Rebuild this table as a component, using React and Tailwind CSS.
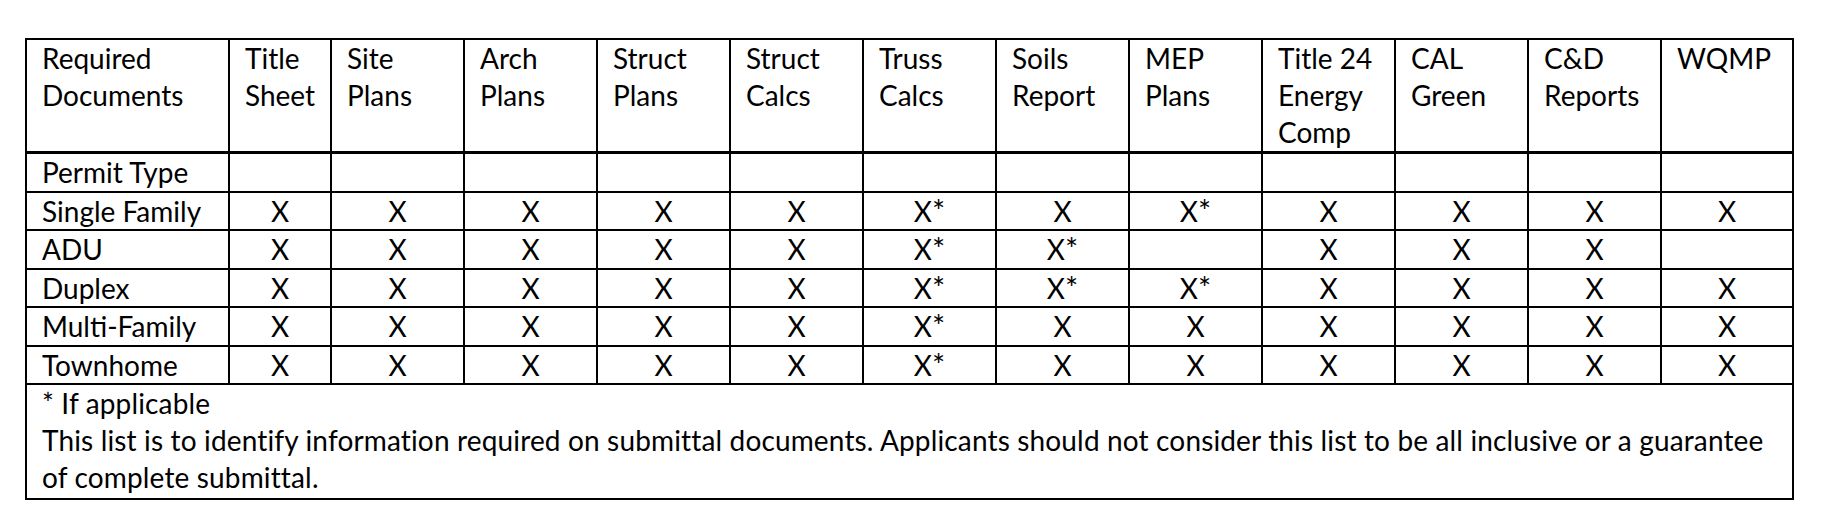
const headers = [
  ["Required", "Documents"],
  ["Title", "Sheet"],
  ["Site", "Plans"],
  ["Arch", "Plans"],
  ["Struct", "Plans"],
  ["Struct", "Calcs"],
  ["Truss", "Calcs"],
  ["Soils", "Report"],
  ["MEP", "Plans"],
  ["Title 24", "Energy", "Comp"],
  ["CAL", "Green"],
  ["C&D", "Reports"],
  ["WQMP"],
];

const rows = [
  ["Single Family", ["X", "X", "X", "X", "X", "X*", "X", "X*", "X", "X", "X", "X"]],
  ["ADU", ["X", "X", "X", "X", "X", "X*", "X*", "", "X", "X", "X", ""]],
  ["Duplex", ["X", "X", "X", "X", "X", "X*", "X*", "X*", "X", "X", "X", "X"]],
  ["Multi-Family", ["X", "X", "X", "X", "X", "X*", "X", "X", "X", "X", "X", "X"]],
  ["Townhome", ["X", "X", "X", "X", "X", "X*", "X", "X", "X", "X", "X", "X"]],
];

const colWidths = [203, 102, 133, 133, 133, 133, 133, 133, 133, 133, 133, 133, 132];

function Mark({ value }) {
  if (value === "X*") {
    return (
      <span>
        X<span className="text-[31px] leading-none">*</span>
      </span>
    );
  }
  return value;
}

export default function App() {
  return (
    <div className="min-h-[525px] w-[1825px] bg-white pl-[25px] pt-[38px] font-['Lato','Liberation_Sans',sans-serif] text-[28px] text-black">
      <table className="table-fixed border-collapse border-2 border-black">
        <colgroup>
          {colWidths.map((w, i) => (
            <col key={i} style={{ width: w }} />
          ))}
        </colgroup>
        <tbody>
          <tr className="h-[112px]">
            {headers.map((lines, i) => (
              <td key={i} className="border-2 border-b-[3px] border-black pl-[15px] align-top leading-[37px]">
                {lines.map((l, j) => (
                  <div key={j}>{l}</div>
                ))}
              </td>
            ))}
          </tr>
          <tr>
            <td className="border-2 border-black pl-[15px] leading-[36.5px]">Permit Type</td>
            {headers.slice(1).map((_, i) => (
              <td key={i} className="border-2 border-black" />
            ))}
          </tr>
          {rows.map(([name, marks]) => (
            <tr key={name}>
              <td className="border-2 border-black pl-[15px] leading-[36.5px] whitespace-nowrap">{name}</td>
              {marks.map((m, i) => (
                <td key={i} className="border-2 border-black text-center leading-[36.5px]">
                  <Mark value={m} />
                </td>
              ))}
            </tr>
          ))}
          <tr>
            <td colSpan={13} className="border-2 border-black pl-[15px] pb-[2px] leading-[37px] tracking-[0.15px]">
              <div>* If applicable</div>
              <div>
                This list is to identify information required on submittal documents. Applicants should not consider this list to be all inclusive or a guarantee
              </div>
              <div>of complete submittal.</div>
            </td>
          </tr>
        </tbody>
      </table>
    </div>
  );
}
